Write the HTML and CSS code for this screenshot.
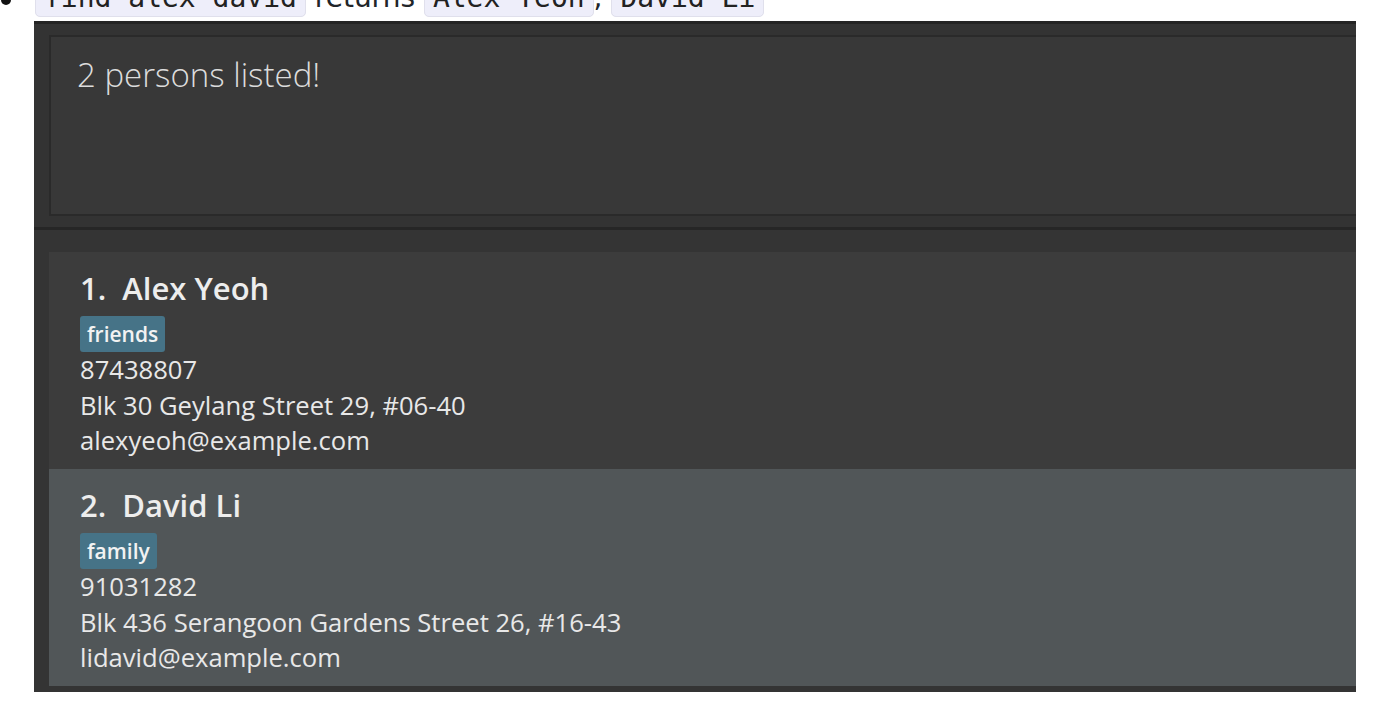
FILE: index.html
```html
<!DOCTYPE html>
<html lang="en">
<head>
<meta charset="utf-8">
<title>find command</title>
<link rel="stylesheet" href="styles.css">
</head>
<body>
<ul class="examples">
<li><code>find alex david</code> returns <code>Alex Yeoh</code>, <code>David Li</code></li>
</ul>
<div class="app">
  <div class="result-pane">
    <div class="result-box">2 persons listed!</div>
  </div>
  <div class="list-pane">
    <div class="card">
      <div class="name">1.&nbsp;&nbsp;Alex Yeoh</div>
      <div class="tags"><span class="tag">friends</span></div>
      <div class="detail">87438807</div>
      <div class="detail">Blk 30 Geylang Street 29, #06-40</div>
      <div class="detail">alexyeoh@example.com</div>
    </div>
    <div class="card card-selected">
      <div class="name">2.&nbsp;&nbsp;David Li</div>
      <div class="tags"><span class="tag">family</span></div>
      <div class="detail">91031282</div>
      <div class="detail">Blk 436 Serangoon Gardens Street 26, #16-43</div>
      <div class="detail">lidavid@example.com</div>
    </div>
  </div>
</div>
</body>
</html>
```
FILE: styles.css
```css
html, body {
  margin: 0;
  padding: 0;
  background: #ffffff;
  overflow: hidden;
}

.examples {
  list-style: none;
  margin: -22px 0 0 0;
  padding: 0 0 0 35px;
  font-family: "DejaVu Sans", sans-serif;
  font-size: 28px;
  line-height: 40px;
  color: #212529;
}

.examples li::before {
  content: "";
  display: inline-block;
  width: 10px;
  height: 10px;
  border-radius: 50%;
  background: #111111;
  margin-left: -34px;
  margin-right: 24px;
  vertical-align: 2.5px;
}

.examples code {
  font-family: "DejaVu Sans Mono", monospace;
  font-size: 28px;
  background: #eeeefa;
  border: 1px solid #e0e0ec;
  border-radius: 5px;
  padding: 2px 8px;
  color: #222222;
}

.app {
  margin: 3px 0 0 34px;
  width: 1322px;
  height: 671px;
  background: #333333;
  border-top: 3px solid #242424;
  box-sizing: border-box;
  display: flex;
  flex-direction: column;
  overflow: hidden;
}

.result-pane {
  padding: 11px 0 11px 15px;
  border-bottom: 3px solid #262626;
}

.result-box {
  height: 162px;
  border: 2px solid #2a2a2a;
  border-right: none;
  background: #383838;
  padding: 15px 0 0 26px;
  font-family: "Open Sans", sans-serif;
  font-weight: 300;
  font-size: 33px;
  color: #dcdcdc;
  box-sizing: content-box;
}

.list-pane {
  flex: 1;
  background: #343434;
  padding: 22px 0 0 15px;
  display: flex;
  flex-direction: column;
}

.card {
  background: #3c3c3c;
  padding: 16px 0 11px 31px;
  height: 217px;
  flex: none;
  box-sizing: border-box;
  font-family: "Open Sans", sans-serif;
  color: #e8e8e8;
}

.card-selected {
  background: #515658;
}

.name {
  font-size: 31px;
  font-weight: 600;
  line-height: 40px;
  color: #ededed;
}

.tags {
  margin-top: 8px;
  display: flex;
}

.tag {
  background: #467387;
  color: #f2f2f2;
  font-size: 21px;
  font-weight: 600;
  line-height: 36px;
  padding: 0 7px;
  border-radius: 3px;
}

.detail {
  font-size: 25.6px;
  line-height: 35.5px;
}
```
